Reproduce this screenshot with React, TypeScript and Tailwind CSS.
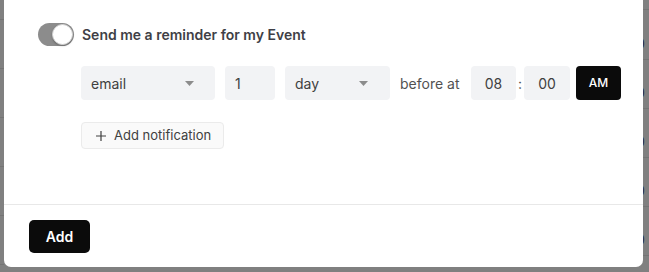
import React from "react";

function Caret() {
  return (
    <svg width="9" height="5" viewBox="0 0 9 5" className="shrink-0">
      <path d="M0 0 L9 0 L4.5 5 Z" fill="#8c8c8c" />
    </svg>
  );
}

export default function App() {
  const leftLines = [20, 49, 49, 49, 49, 49];
  const rightRows = [10, 50, 49, 49, 49, 49];
  return (
    <div className="w-[649px] h-[272px] bg-[#808080] flex overflow-hidden font-['Inter',sans-serif]">
      <div className="w-[4px] shrink-0 flex flex-col">
        {leftLines.map((h, i) => (
          <div key={i} className="border-b border-[#747474] shrink-0" style={{ height: h }} />
        ))}
      </div>
      <div className="w-[639px] h-[267px] shrink-0 bg-white rounded-b-[7px] flex flex-col">
        <div className="h-[204px] pl-[34px] pt-[23px] flex flex-col">
          <div className="flex items-center gap-[8px] h-[23px]">
            <div className="w-[36px] h-[23px] rounded-full bg-[#8c8c8c] flex items-center justify-end pr-[1px]">
              <div className="w-[21px] h-[21px] rounded-full bg-white border border-[#d4d4d4] shadow-[0_1px_2px_rgba(0,0,0,0.25)]" />
            </div>
            <span className="text-[14px] font-semibold text-[#3f3f46] leading-none">
              Send me a reminder for my Event
            </span>
          </div>
          <div className="ml-[43px] mt-[20px] flex items-center h-[34px] text-[14px] text-[#404040]">
            <div className="w-[134px] h-[34px] shrink-0 rounded-[4px] bg-[#f2f3f5] flex items-center justify-between pl-[10px] pr-[21px]">
              <span>email</span>
              <Caret />
            </div>
            <div className="ml-[10px] w-[50px] h-[34px] shrink-0 rounded-[4px] bg-[#f2f3f5] flex items-center pl-[10px]">
              <span>1</span>
            </div>
            <div className="ml-[10px] w-[105px] h-[34px] shrink-0 rounded-[4px] bg-[#f2f3f5] flex items-center justify-between pl-[10px] pr-[22px]">
              <span>day</span>
              <Caret />
            </div>
            <span className="ml-[10px] w-[71px] shrink-0 text-[#525252]">before at</span>
            <div className="w-[45px] h-[34px] shrink-0 rounded-[4px] bg-[#f2f3f5] flex items-center justify-center">
              <span>08</span>
            </div>
            <span className="w-[8px] shrink-0 text-center text-[#525252]">:</span>
            <div className="w-[46px] h-[34px] shrink-0 rounded-[4px] bg-[#f2f3f5] flex items-center justify-center">
              <span>00</span>
            </div>
            <div className="ml-[6px] w-[45px] h-[34px] shrink-0 rounded-[4px] bg-[#0b0b0b] flex items-center justify-center">
              <span className="text-white text-[12px] font-medium">AM</span>
            </div>
          </div>
          <div className="ml-[43px] mt-[22px]">
            <div className="inline-flex items-center gap-[8px] h-[27px] w-[143px] pl-[14px] rounded-[4px] border border-[#ebebeb] bg-[#fafafa] text-[13px] text-[#404040]">
              <svg width="10" height="10" viewBox="0 0 10 10" className="shrink-0">
                <path d="M5 0 V10 M0 5 H10" stroke="#404040" strokeWidth="1.2" />
              </svg>
              <span>Add notification</span>
            </div>
          </div>
        </div>
        <div className="border-t border-[#e8e8e8] pt-[15px] pl-[25px]">
          <div className="w-[61px] h-[33px] rounded-[5px] bg-[#0b0b0b] flex items-center justify-center">
            <span className="text-white text-[14px] font-semibold">Add</span>
          </div>
        </div>
      </div>
      <div className="flex-1 flex flex-col overflow-hidden">
        {rightRows.map((h, i) => (
          <div key={i} className="border-b border-[#747474] shrink-0 flex items-end pb-[8px]" style={{ height: h }}>
            {i > 0 && <span className="text-[14px] leading-none text-[#2a2a3a] -ml-[7px]">0</span>}
          </div>
        ))}
      </div>
    </div>
  );
}
